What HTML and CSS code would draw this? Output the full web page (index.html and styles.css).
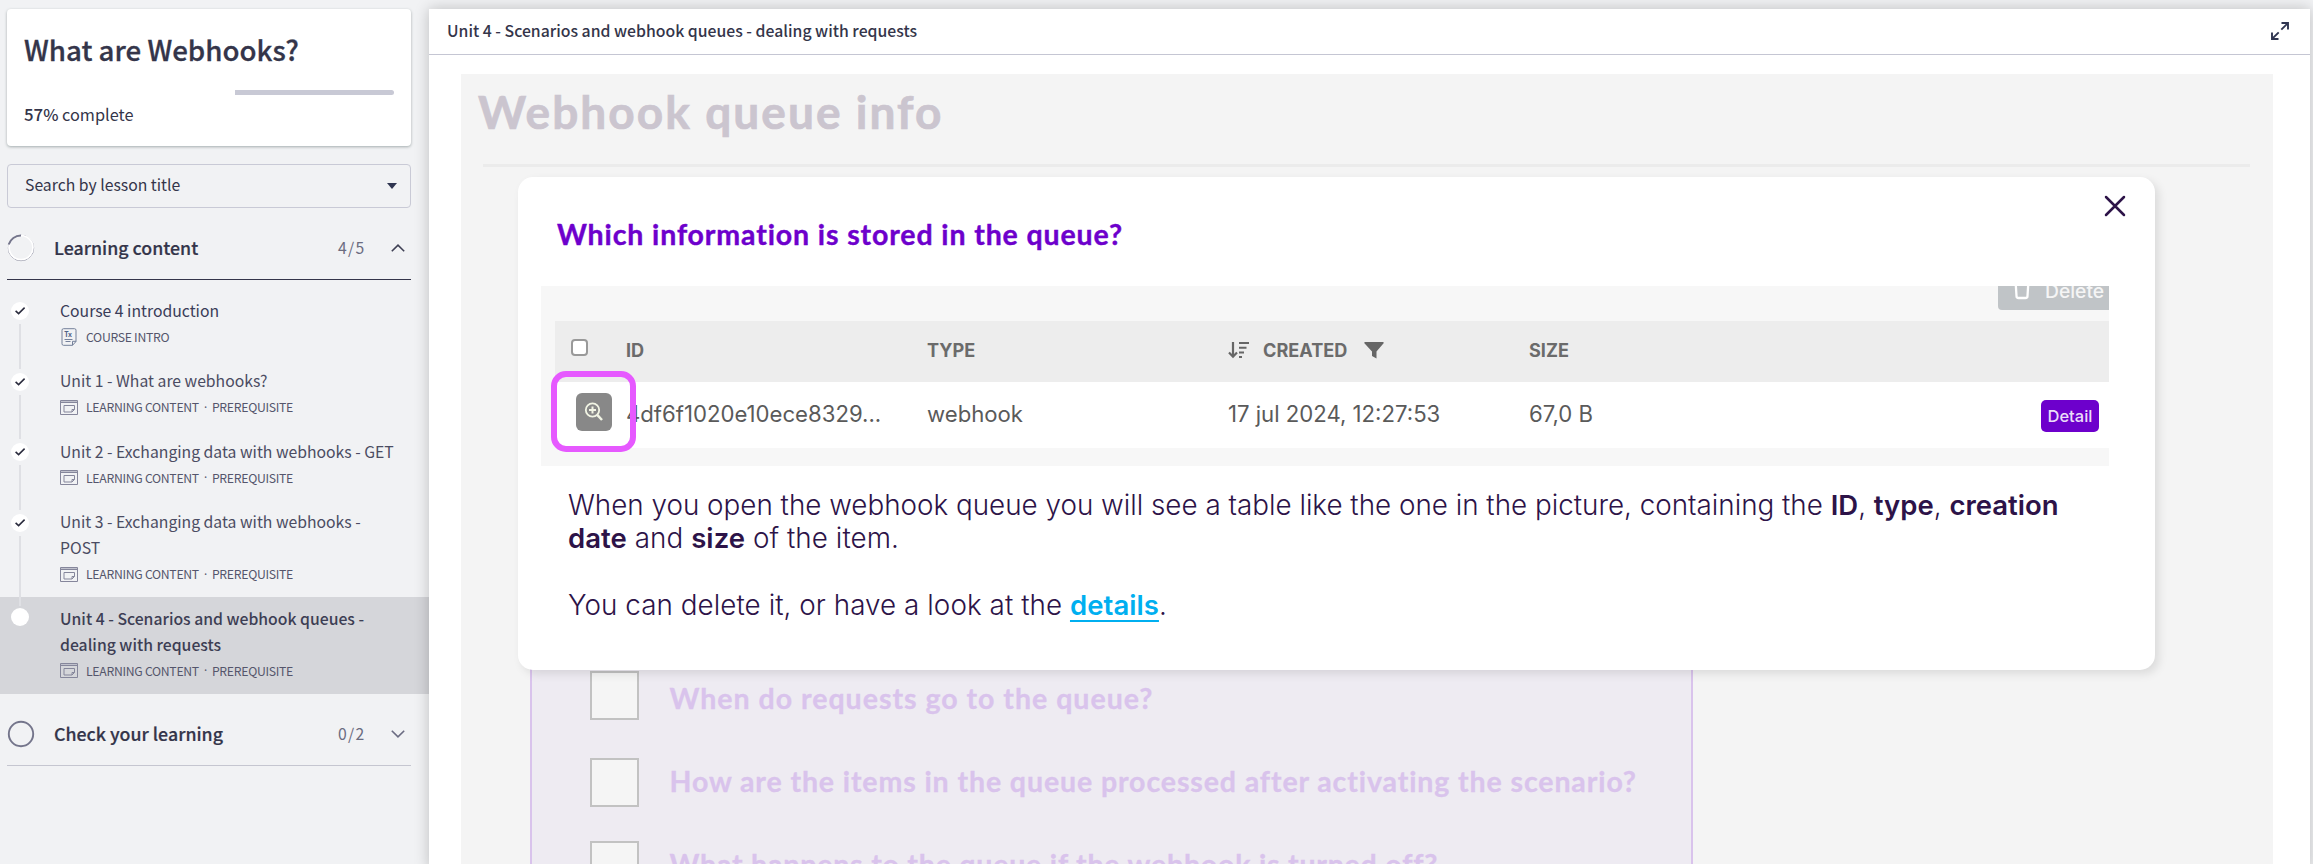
FILE: index.html
```html
<!DOCTYPE html>
<html lang="en">
<head>
<meta charset="utf-8">
<title>What are Webhooks?</title>
<link rel="stylesheet" href="styles.css">
</head>
<body>
<svg class="defs" width="0" height="0" aria-hidden="true">
  <symbol id="check" viewBox="0 0 18 18"><path d="M4.6 8.800l3 2.800 6-6" fill="none" stroke="#2b2c3e" stroke-width="1.6"/></symbol>
  <symbol id="lesson" viewBox="0 0 18 15"><path d="M1 1h16v1.500H1z" fill="#c0c1cc"/><path d="M.5.5h17v14H.5zM.5 2.500h17M4 5.500h10.500v4L12 12H4zM14.500 9.500H12V12" fill="none" stroke="#85869b" stroke-width="1"/></symbol>
</svg>
<aside class="sidebar">
  <section class="course">
    <h1 class="course-title">What are Webhooks?</h1>
    <div class="progress"><span class="progress-rest"></span></div>
    <p class="complete"><b>57</b><span class="pct">%</span> complete</p>
  </section>
  <div class="search"><span>Search by lesson title</span><svg width="10" height="6" viewBox="0 0 10 6"><path d="M0 0h10L5 6z" fill="#2f3550"/></svg></div>

  <div class="section section-open">
    <svg class="ring" width="28" height="28" viewBox="0 0 28 28"><circle cx="14" cy="14" r="12.700" fill="none" stroke="#8d8ea0" stroke-width="1"/><circle cx="14" cy="13.600" r="12" fill="none" stroke="#fff" stroke-width="1.800"/><path d="M1.700 10.500A12.700 12.700 0 0 1 14 1.500" fill="none" stroke="#74758b" stroke-width="2"/></svg>
    <span class="section-name">Learning content</span><span class="count">4/5</span>
    <svg class="chev" width="14" height="8" viewBox="0 0 14 8"><path d="M.8 7.300L7 1.200l6.200 6.100" fill="none" stroke="#3f4054" stroke-width="1.600"/></svg>
  </div>

  <ol class="lessons">
    <li class="lesson">
      <div class="rail"><svg class="dot"><use href="#check"/></svg><i class="link"></i></div>
      <div class="info"><span class="name first">Course 4 introduction</span>
        <span class="meta first-meta"><svg class="icon-tx" width="16" height="18" viewBox="0 0 16 18"><path d="M2.500.700h11a1.500 1.500 0 0 1 1.500 1.500v11.300L11.500 17.300h-9A1.500 1.500 0 0 1 1 15.800V2.200A1.500 1.500 0 0 1 2.500.7zM15 13.300h-3.500v4M3.500 11.500h8M4.500 13.500h5" fill="none" stroke="#74809a"/><text x="3.200" y="9" font-size="7" font-weight="700" fill="#4e6288">Tx</text></svg><span>COURSE INTRO</span></span></div>
    </li>
    <li class="lesson">
      <div class="rail"><svg class="dot"><use href="#check"/></svg><i class="link"></i></div>
      <div class="info"><span class="name">Unit 1 - What are webhooks?</span>
        <span class="meta"><svg width="18" height="15"><use href="#lesson"/></svg><span>LEARNING CONTENT</span><span class="sep">·</span><span>PREREQUISITE</span></span></div>
    </li>
    <li class="lesson">
      <div class="rail"><svg class="dot"><use href="#check"/></svg><i class="link"></i></div>
      <div class="info"><span class="name">Unit 2 - Exchanging data with webhooks - GET</span>
        <span class="meta"><svg width="18" height="15"><use href="#lesson"/></svg><span>LEARNING CONTENT</span><span class="sep">·</span><span>PREREQUISITE</span></span></div>
    </li>
    <li class="lesson">
      <div class="rail"><svg class="dot"><use href="#check"/></svg><i class="link"></i></div>
      <div class="info"><span class="name">Unit 3 - Exchanging data with webhooks -<br>POST</span>
        <span class="meta"><svg width="18" height="15"><use href="#lesson"/></svg><span>LEARNING CONTENT</span><span class="sep">·</span><span>PREREQUISITE</span></span></div>
    </li>
    <li class="lesson active">
      <div class="rail"><svg class="dot"></svg></div>
      <div class="info"><span class="name">Unit 4 - Scenarios and webhook queues -<br>dealing with requests</span>
        <span class="meta"><svg width="18" height="15"><use href="#lesson"/></svg><span>LEARNING CONTENT</span><span class="sep">·</span><span>PREREQUISITE</span></span></div>
    </li>
  </ol>

  <div class="section section-closed">
    <svg class="ring" width="28" height="28" viewBox="0 0 28 28"><circle cx="14" cy="14" r="12.200" fill="none" stroke="#74758b" stroke-width="1.900"/></svg>
    <span class="section-name">Check your learning</span><span class="count">0/2</span>
    <svg class="chev" width="14" height="8" viewBox="0 0 14 8"><path d="M.8.7L7 6.800 13.200.700" fill="none" stroke="#6b6c82" stroke-width="1.600"/></svg>
  </div>
</aside>

<main class="main">
  <header class="bar"><span class="bar-title">Unit 4 - Scenarios and webhook queues - dealing with requests</span>
    <svg width="18" height="18" viewBox="0 0 18 18"><path d="M10.500 1H17v6.500M16.700 1.300L10.300 7.700M7.500 17H1v-6.500M1.300 16.700l6.400-6.400" fill="none" stroke="#2f3550" stroke-width="1.900"/></svg></header>
  <div class="stage">
    <h2 class="page-title">Webhook queue info</h2>
    <hr class="rule">
    <section class="quiz">
      <div class="q q-first"><span class="box"></span><span class="label label-first">When do requests go to the queue?</span></div>
      <div class="q"><span class="box"></span><span class="label">How are the items in the queue processed after activating the scenario?</span></div>
      <div class="q"><span class="box"></span><span class="label label-last">What happens to the queue if the webhook is turned off?</span></div>
    </section>
    <article class="modal">
      <svg class="close" width="22" height="22" viewBox="0 0 22 22"><path d="M2 2l18 18M20 2L2 20" fill="none" stroke="#2d1348" stroke-width="2.500" stroke-linecap="round"/></svg>
      <h3 class="modal-title">Which information is stored in the queue?</h3>
      <div class="shot">
        <div class="toolbar"><div class="delete"><svg width="16" height="24" viewBox="0 0 16 24"><path d="M1.500 4l1 16a2 2 0 0 0 2 2h7a2 2 0 0 0 2-2l1-16" fill="none" stroke="#fff" stroke-width="2.300"/></svg><span>Delete</span></div></div>
        <div class="row head">
          <span class="cb"><i></i></span><span>ID</span><span>TYPE</span>
          <span class="created"><svg width="22" height="18" viewBox="0 0 22 18"><path d="M5 1v14M1 11.500l4 4.200 4-4.200" fill="none" stroke="#666" stroke-width="2.200"/><path d="M11 2h10M11 6.700h7.500M11 11.400h5M11 16h3" stroke="#666" stroke-width="2"/></svg><span>CREATED</span><svg width="20" height="17" viewBox="0 0 20 17"><path d="M1 0h18a.8.8 0 0 1 .6 1.300L12.500 9.500V16.500L8 14V9.500L.4 1.300A.8.8 0 0 1 1 0z" fill="#666"/></svg></span>
          <span>SIZE</span>
        </div>
        <div class="row data">
          <span class="zoom"><i class="btn"><svg width="20" height="20" viewBox="0 0 20 20"><circle cx="8.500" cy="8" r="6.700" fill="none" stroke="#f1f4e4" stroke-width="1.800"/><path d="M13 12.700l5 5.300" fill="none" stroke="#f1f4e4" stroke-width="2.500"/><path d="M8.500 4.500v7M5 8h7" fill="none" stroke="#f1f4e4" stroke-width="2"/></svg></i></span>
          <span>4df6f1020e10ece8329...</span><span>webhook</span><span>17 jul 2024, 12:27:53</span><span>67,0 B</span><span class="detail">Detail</span>
        </div>
      </div>
      <div class="highlight"></div>
      <p class="text">When you open the webhook queue you will see a table like the one in the picture, containing the <b>ID</b>, <b>type</b>, <b>creation</b><br><span class="loose"><b>date</b> and <b>size</b> of the item.<br><br>You can delete it, or have a look at the <a class="details">details</a>.</span></p>
    </article>
  </div>
</main>
</body>
</html>
```
FILE: styles.css
```css
* { box-sizing: border-box; }
body { margin: 0; width: 2313px; height: 864px; overflow: hidden; display: flex; background: #f1f2f4; color: #34354a; font-family: "Noto Sans CJK SC", "Open Sans", sans-serif; font-size: 15.750px; }
h1, h2, h3, p, ol { margin: 0; padding: 0; }
svg { display: block; flex: none; }
.defs { position: absolute; }

.sidebar { width: 429px; height: 864px; flex: none; padding-top: 9px; white-space: nowrap; }
.course { margin-left: 7px; width: 404px; height: 137px; background: #fff; border-radius: 4px; box-shadow: 0 1px 3px rgba(50, 70, 70, .4); padding: 20px 18px 0 17px; }
.course-title { font-size: 27.700px; line-height: 40px; font-weight: 500; -webkit-text-stroke: .3px #34354a; }
.progress { height: 5px; margin: 21px -1px 0 0; display: flex; justify-content: flex-end; }
.progress-rest { width: 159px; height: 5px; background: #c8c9d5; border-radius: 0 3px 3px 0; }
.complete { font-size: 16.300px; line-height: 24px; margin-top: 7px; }
.complete b, .pct { font-weight: 500; }
.complete b { font-size: 16.800px; }
.search { margin: 18px 0 0 7px; width: 404px; height: 44px; border: 1px solid #c9cad6; border-radius: 4px; display: flex; align-items: center; justify-content: space-between; padding: 0 13px 0 17px; }
.search span { margin-top: -3px; }

.section { margin-left: 7px; width: 404px; display: flex; align-items: center; border-bottom: 1px solid #c5c6d0; }
.section-open { height: 72px; padding-top: 9px; border-color: #34354a; }
.section-closed { height: 72px; padding-top: 9px; }
.section-name { font-size: 17.800px; font-weight: 500; margin: -2px 0 0 19px; flex: 1; -webkit-text-stroke: .2px #34354a; }
.count { color: #6b6c80; letter-spacing: 1.300px; width: 53px; margin-top: -1px; }
.chev { margin-right: 6px; }

.lessons { list-style: none; padding-top: 9px; }
.lesson { display: flex; padding-bottom: 11px; }
.rail { position: relative; z-index: 1; width: 40px; display: flex; flex-direction: column; align-items: center; padding-top: 13px; margin-bottom: -20px; }
.dot { width: 18px; height: 18px; background: #fff; border-radius: 50%; }
.link { width: 2px; flex: 1; margin-top: 4px; background: #dfe0e4; }
.info { padding: 8.500px 0 0 20px; }
.name { display: block; line-height: 26px; color: #4b4c62; }
.first, .first-meta { color: #3a3c58; }
.meta { display: flex; align-items: center; height: 24px; margin-top: 1px; font-size: 12.250px; letter-spacing: -.3px; color: #55566c; }
.meta svg { margin-right: 8px; }
.meta .icon-tx { margin: 0 9px 0 1px; }
.sep { width: 13px; text-align: center; font-family: "Open Sans", sans-serif; }
.active { background: #d5d6da; }
.active .name { font-weight: 500; color: #3d3e54; }
.active .rail { padding-top: 11px; }

.main { width: 1881px; height: 860px; margin-top: 9px; flex: none; background: #fff; box-shadow: 0 0 14px rgba(0, 0, 0, .22); position: relative; z-index: 2; }
.bar { height: 46px; border-bottom: 1px solid #c5c6d3; display: flex; align-items: center; justify-content: space-between; padding: 0 21px 2px 18px; }
.bar-title { font-weight: 500; font-size: 15.800px; margin-top: -1px; }

.stage { position: relative; margin: 19px 37px 0 32px; height: 800px; background: #f4f4f4; overflow: hidden; }
.page-title { font: 700 46px/60px Lato, sans-serif; letter-spacing: 2.050px; color: #cbc5cf; padding: 8px 0 0 17px; white-space: nowrap; -webkit-text-stroke: .7px #cbc5cf; }
.rule { margin: 22px 23px 0 22px; border: 0; height: 3px; background: #ebebeb; }
.quiz { margin: 474px 0 0 68.500px; width: 1163px; height: 320px; background: #eeebf2; border: solid #d9c3ec; border-width: 0 2px; padding: 30px 0 0 58px; }
.q { display: flex; align-items: center; gap: 31px; height: 49px; margin-bottom: 34px; font: 700 28.500px/49px Lato, sans-serif; letter-spacing: .9px; color: #d9c3ec; white-space: nowrap; -webkit-text-stroke: .3px #d9c3ec; }
.q-first { margin-bottom: 38px; }
.label { margin-top: -3px; }
.label-first { margin-top: 5px; letter-spacing: 1px; }
.label-last { letter-spacing: .8px; }
.box { width: 49px; height: 49px; border: 2px solid #c2c2c2; background: #f5f5f5; flex: none; }

.modal { position: absolute; left: 57px; top: 103px; width: 1637px; height: 493px; border-radius: 15px; background: #fff; box-shadow: 4px 4px 10px rgba(0, 0, 0, .1); padding: 37px 0 0 23px; }
.close { position: absolute; right: 29px; top: 18px; }
.modal-title { font: 700 28.500px/40px Lato, sans-serif; letter-spacing: .88px; color: #6d00cc; padding-left: 16px; white-space: nowrap; -webkit-text-stroke: .4px #6d00cc; }
.shot { width: 1568px; height: 180px; margin-top: 32px; background: #f7f7f7; overflow: hidden; font-family: Inter, sans-serif; color: #5a5a5a; }
.toolbar { height: 35px; display: flex; justify-content: flex-end; }
.delete { width: 111px; height: 24px; background: #c0c4c7; border-radius: 0 0 0 4px; color: #f5f5f5; display: flex; align-items: flex-end; padding: 0 0 10px 16px; gap: 15px; font-size: 19.300px; font-weight: 500; line-height: 24px; overflow: hidden; }
.delete span { margin-bottom: -3px; }
.row { margin-left: 14px; display: grid; grid-template-columns: 71px 301px 301px 301px 301px 1fr; align-items: center; }
.head { height: 61px; background: #ededed; font-size: 18.100px; font-weight: 650; color: #6b6b6b; padding-bottom: 3px; }
.cb { padding-left: 16px; }
.cb i { display: block; width: 17px; height: 17px; border: 2px solid #999; border-radius: 4px; background: #fff; margin-top: -5px; }
.created { display: flex; align-items: center; }
.created span { margin: 0 17px 0 13px; }
.data { height: 66px; background: #fff; font-size: 22.150px; padding-bottom: 3px; }
.zoom { padding-left: 21px; }
.btn { width: 36px; height: 38px; border-radius: 6px; background: #888; display: flex; align-items: center; justify-content: center; margin-top: -3px; }
.detail { justify-self: end; margin: 4px 10px 0 0; width: 58px; height: 32px; border-radius: 5px; background: #6d00cc; color: #eadcf8; font-size: 16.500px; font-weight: 500; line-height: 32px; text-align: center; }
.highlight { position: absolute; left: 33px; top: 194px; width: 85px; height: 81px; border: 6px solid #e659ff; border-radius: 15px; }
.text { font: 300 27.800px/33.400px Inter, sans-serif; color: #2d1348; padding: 23px 0 0 27px; white-space: nowrap; }
.text b, .details { font-size: 27.500px; font-weight: 600; }
.loose { letter-spacing: .06px; }
.details { color: #00aff0; text-decoration: underline; text-decoration-thickness: 2px; text-underline-offset: 5px; text-decoration-skip-ink: none; }
```
